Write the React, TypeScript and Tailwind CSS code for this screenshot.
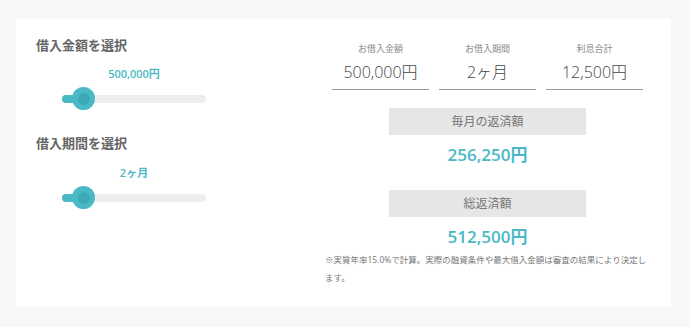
import React from "react";

const font = { fontFamily: '"Open Sans", "Noto Sans CJK JP", sans-serif' };

function Slider({ label }: { label: string }) {
  return (
    <div className="w-[144px] ml-[26px]">
      <div className="text-center text-[11px] leading-[14px] font-semibold text-[#4ab9c6]">{label}</div>
      <div className="relative mt-[14px] h-[8px] rounded-full bg-[#eeeeee]">
        <div className="absolute left-0 top-0 h-[8px] w-[22px] rounded-full bg-[#4ab9c6]" />
        <div className="absolute left-[10px] top-[-8px] flex h-[23px] w-[23px] items-center justify-center rounded-full bg-[#4ab9c6]">
          <div className="h-[12px] w-[12px] rounded-full bg-[#3ea9b6]" />
        </div>
      </div>
    </div>
  );
}

function Stat({ label, value }: { label: string; value: string }) {
  return (
    <div className="w-[97px] flex flex-col items-center border-b-[1.5px] border-[#9a9a9a]">
      <div className="text-[9px] leading-[12px] text-[#8a8a8a]">{label}</div>
      <div className="mt-[6px] mb-[6px] text-[16px] leading-[22px] font-light text-[#444]">{value}</div>
    </div>
  );
}

function Result({ title, value }: { title: string; value: string }) {
  return (
    <div className="flex flex-col items-center">
      <div className="flex h-[27px] w-[197px] items-center justify-center bg-[#e6e6e6] text-[12px] text-[#777]">
        {title}
      </div>
      <div className="mt-[8px] text-[17px] leading-[24px] font-semibold text-[#4ab9c6]">{value}</div>
    </div>
  );
}

export default function App() {
  return (
    <div className="min-h-[327px] bg-[#f7f7f7] pt-[19px] pl-[16px]" style={font}>
      <div className="flex h-[288px] w-[655px] bg-white pl-[20px] pt-[17px]">
        <div className="w-[289px]">
          <h2 className="text-[13px] leading-[18px] font-bold text-[#666]">借入金額を選択</h2>
          <div className="mt-[13px]">
            <Slider label="500,000円" />
          </div>
          <h2 className="mt-[31px] text-[13px] leading-[18px] font-bold text-[#666]">借入期間を選択</h2>
          <div className="mt-[14px]">
            <Slider label="2ヶ月" />
          </div>
        </div>
        <div className="w-[325px] pt-[7px]">
          <div className="flex justify-center gap-[10px]">
            <Stat label="お借入金額" value="500,000円" />
            <Stat label="お借入期間" value="2ヶ月" />
            <Stat label="利息合計" value="12,500円" />
          </div>
          <div className="mt-[18px]">
            <Result title="毎月の返済額" value="256,250円" />
          </div>
          <div className="mt-[23px]">
            <Result title="総返済額" value="512,500円" />
          </div>
          <p className="mt-[2px] text-[8.5px] leading-[18px] text-[#777]">
            ※実質年率15.0%で計算。実際の融資条件や最大借入金額は審査の結果により決定します。
          </p>
        </div>
      </div>
    </div>
  );
}
